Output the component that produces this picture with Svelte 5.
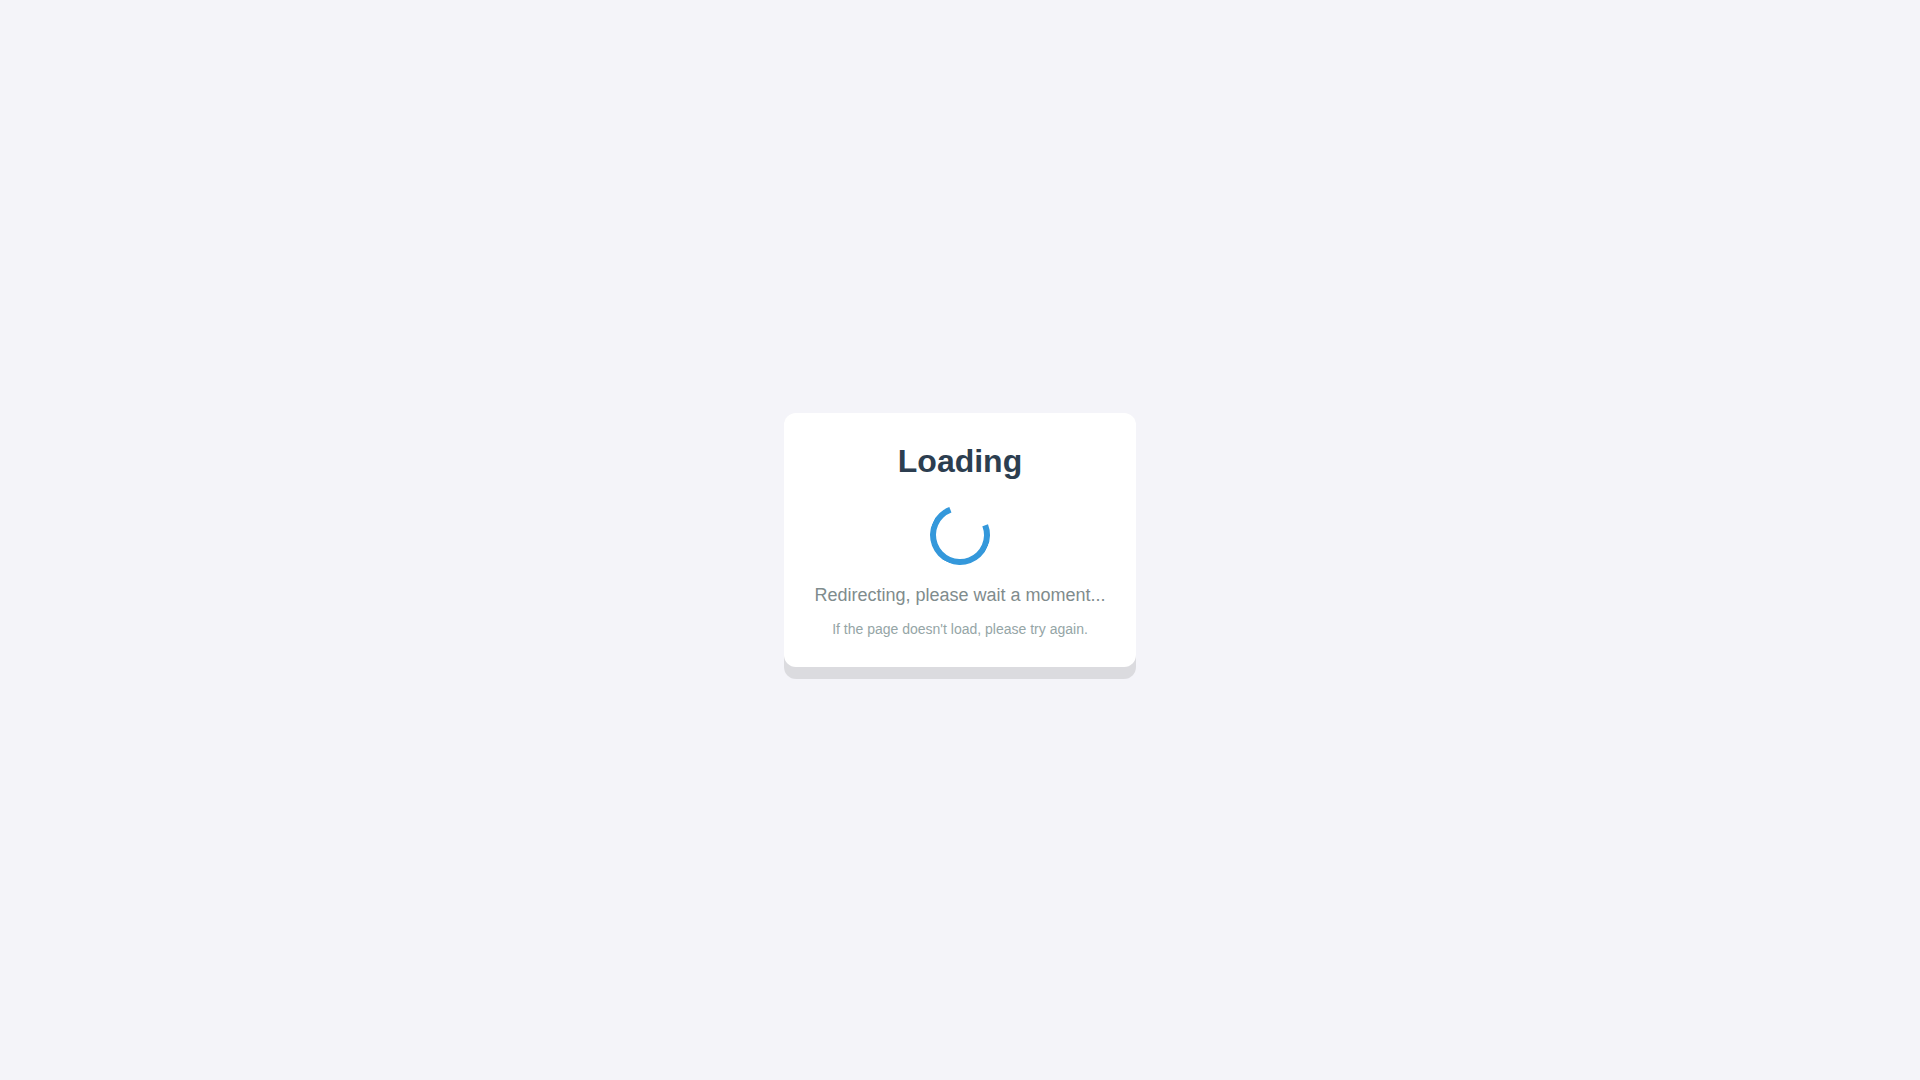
<script>
  export let title = "Loading";
  export let message = "Redirecting, please wait a moment...";
  export let hint = "If the page doesn't load, please try again.";
</script>

<main class="page">
  <div class="card" role="status">
    <h1>{title}</h1>
    <div class="spinner" aria-hidden="true"></div>
    <p class="message">{message}</p>
    <p class="hint">{hint}</p>
  </div>
</main>

<style>
  :global(body) {
    margin: 0;
    background: #f4f4f9;
    font-family: Arial, "Liberation Sans", sans-serif;
  }

  .page {
    display: flex;
    align-items: center;
    justify-content: center;
    min-height: 100vh;
  }

  .card {
    padding: 30px;
    border-radius: 12px;
    background: #fff;
    box-shadow: 0 12px 0 rgba(0, 0, 0, 0.1);
    text-align: center;
  }

  h1 {
    margin: 0 0 25px;
    color: #2c3e50;
    font-size: 32px;
    font-weight: bold;
  }

  .spinner {
    box-sizing: border-box;
    width: 60px;
    height: 60px;
    margin: 0 auto 20px;
    border: 6px solid #3498db;
    border-top-color: transparent;
    border-radius: 50%;
    transform: rotate(24deg);
  }

  .message {
    margin: 0 0 15px;
    color: #7f8c8d;
    font-size: 18px;
  }

  .hint {
    margin: 0;
    color: #95a5a6;
    font-size: 14px;
  }
</style>
